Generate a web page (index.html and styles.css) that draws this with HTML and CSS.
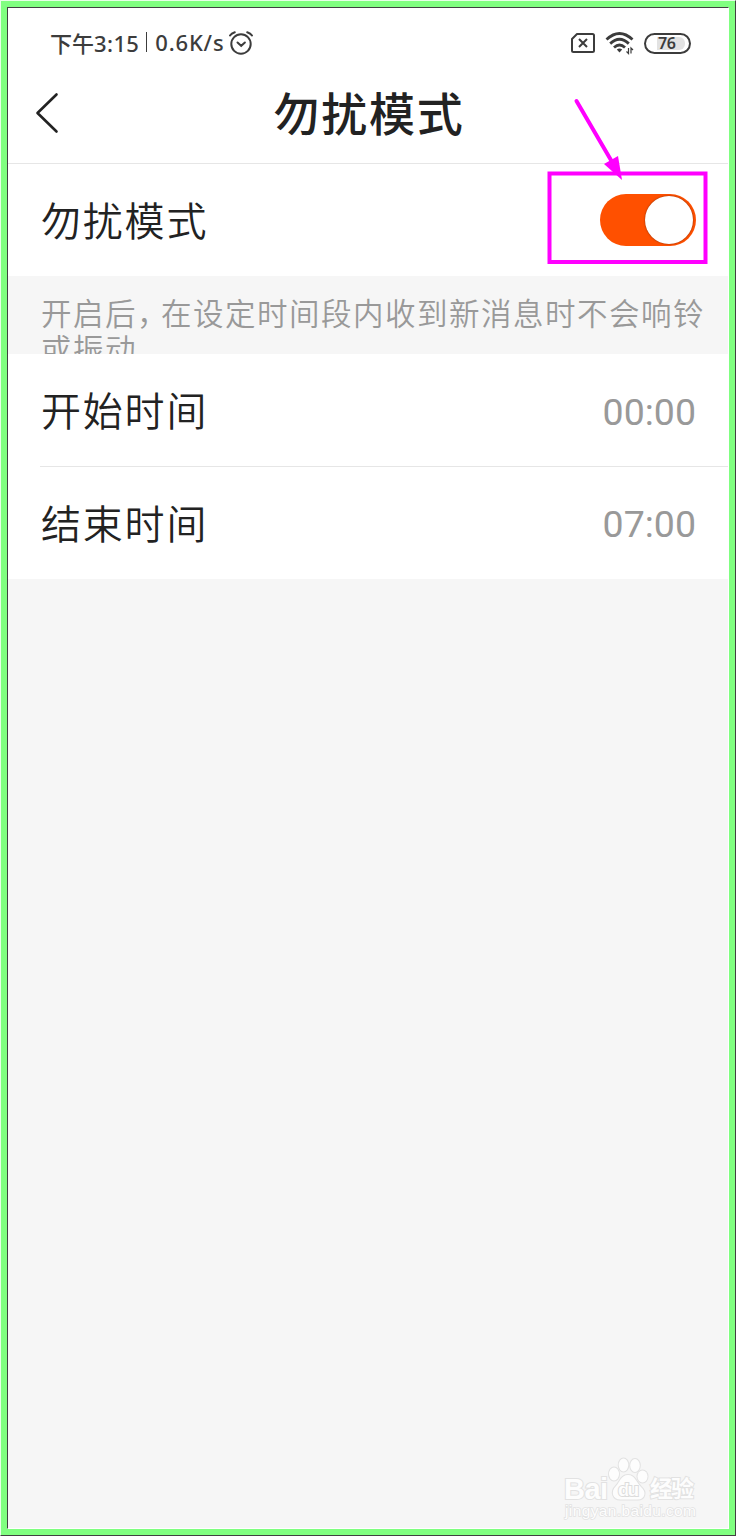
FILE: index.html
```html
<!DOCTYPE html>
<html lang="zh-CN">
<head>
    <meta charset="UTF-8">
    <meta name="viewport" content="width=device-width, initial-scale=1.0">
    <title>勿扰模式</title>
    <link rel="stylesheet" href="styles.css">
</head>
<body>

<div class="frame">
    <div class="screen">
        <div class="status">
            <span class="clock">下午<b>3:15</b></span>
            <span class="divider"></span>
            <span class="speed">0.6K/s</span>
            <svg class="alarm" width="26" height="26" viewBox="0 0 26 26" fill="none" stroke="#3c3c3c" stroke-width="2" stroke-linecap="round">
                <circle cx="13" cy="14" r="9.7"/>
                <path d="M9.5 12.5l3.7 3.3 3.7-3.3M2 5.5Q3.5 3.2 6.8 2.2M24 5.5Q22.5 3.2 19.2 2.2"/>
            </svg>
            <div class="status-right">
                <svg width="26" height="22" viewBox="0 0 26 22" fill="none" stroke="#3c3c3c" stroke-width="2">
                    <path d="M7 2H22.5q1.500 0 1.500 1.500v15q0 1.500-1.500 1.500H3.500q-1.500 0-1.500-1.500V7z" stroke-linejoin="round"/>
                    <path d="M9 7l8 8M17 7l-8 8"/>
                </svg>
                <svg width="30" height="24" viewBox="0 0 30 24" fill="none" stroke="#3c3c3c" stroke-width="2.800">
                    <path d="M1.500 8.500Q14.500-3.500 27.500 8.500M5.200 12.600Q14.500 4 23.800 12.600M9 16.500Q14.500 11.500 20 16.500"/>
                    <path d="M11.800 18.500Q14.500 16.500 17.200 18.500L14.500 21.500z" fill="#3c3c3c" stroke="none"/>
                    <path d="M23.500 17v5.500l-2-2M26 22.500V17l2 2" stroke-width="1.200"/>
                </svg>
                <span class="battery"><span class="level">76</span></span>
            </div>
        </div>

        <div class="header">
            <svg class="back" width="26" height="42" viewBox="0 0 26 42" fill="none" stroke="#222" stroke-width="2.600" stroke-linecap="round" stroke-linejoin="round">
                <path d="M22.500 2.500L3.500 21l19 18.500"/>
            </svg>
            <h1>勿扰模式</h1>
        </div>

        <div class="row">
            <span class="label">勿扰模式</span>
            <span class="switch"><span class="knob"></span></span>
        </div>
        <p class="hint">开启后<span class="comma">，</span>在设定时间段内收到新消息时不会响铃<br>或振动</p>
        <div class="row line">
            <span class="label">开始时间</span>
            <span class="time">00:00</span>
        </div>
        <div class="row">
            <span class="label">结束时间</span>
            <span class="time">07:00</span>
        </div>
    </div>

    <!-- highlight box and arrow over the switch -->
    <svg class="mark" width="170" height="176" viewBox="0 0 170 176">
        <rect x="10.500" y="84.500" width="156" height="88.500" fill="none" stroke="#ff00ff" stroke-width="4"/>
        <path d="M37.500 12l35 60" stroke="#ff00ff" stroke-width="4" stroke-linecap="round"/>
        <path d="M65 75L79 67 83 91z" fill="#ff00ff"/>
    </svg>

    <svg class="watermark" width="146" height="76" viewBox="0 0 146 76" fill="#fdfdfd" stroke="#e2e2e2" stroke-width="2" paint-order="stroke">
        <text class="wm-logo" x="2" y="49" textLength="44">Bai</text>
        <ellipse cx="52" cy="24" rx="5" ry="6.500"/>
        <ellipse cx="61.500" cy="15" rx="4.800" ry="6.500"/>
        <ellipse cx="73" cy="15.500" rx="4.800" ry="6.500"/>
        <ellipse cx="80.500" cy="26.500" rx="5" ry="6"/>
        <path d="M66 25C59 25 58 32 54 36C48 42 51 50 59 49.500H75C83 50 85 42 79 37C74 32 73 25 66 25z"/>
        <text class="wm-du" x="56" y="46" textLength="21">du</text>
        <text class="wm-cn" x="88" y="47" textLength="44">经验</text>
        <text class="wm-url" x="3" y="66" textLength="131">jingyan.baidu.com</text>
    </svg>
</div>

</body>
</html>
```
FILE: styles.css
```css
* {
    box-sizing: border-box;
}
body {
    margin: 0;
    font-family: "Noto Sans CJK SC", sans-serif;
    color: #222;
}
.frame {
    position: relative;
    width: 736px;
    height: 1536px;
    padding: 6px;
    background: #80ff80;
    border: 1px solid;
    border-color: #e8ffe8 #404040 #404040 #e8ffe8;
}
.screen {
    height: 1522px;
    background: #f6f6f6;
    border: 1px solid;
    border-color: #404040 #fff #fff #404040;
}
.status {
    display: flex;
    align-items: center;
    height: 70px;
    padding: 0 37px 0 42px;
    background: #fff;
    color: #3c3c3c;
    font-size: 22px;
}
.clock {
    padding-bottom: 3px;
    font-weight: 500;
}
.clock b {
    font-family: "Noto Sans", sans-serif;
    font-weight: 500;
    letter-spacing: 0.400px;
}
.divider {
    width: 1px;
    height: 20px;
    margin: 0 8px 2px 7px;
    background: #3c3c3c;
}
.speed {
    padding-bottom: 3px;
    font-family: "Noto Sans", sans-serif;
    font-weight: 500;
    letter-spacing: 0.800px;
}
.alarm {
    margin-left: 4px;
}
.status-right {
    display: flex;
    align-items: center;
    gap: 9px;
    margin-left: auto;
}
.battery {
    width: 47px;
    height: 21px;
    padding: 2px 4px 2px 11px;
    border: 2px solid #3c3c3c;
    border-radius: 11px;
}
.level {
    display: block;
    width: 28px;
    height: 13px;
    padding-left: 1px;
    background: #e2e2e2;
    border-radius: 0 6px 6px 0;
    font: 600 16px/12px "Noto Sans", sans-serif;
    letter-spacing: -0.500px;
}
.header {
    display: flex;
    align-items: center;
    height: 86px;
    padding: 0 26px 16px;
    background: #fff;
    border-bottom: 1px solid #e6e6e6;
}
.header h1 {
    flex: 1;
    margin: 0 24px 4px 0;
    font-size: 46px;
    font-weight: 500;
    letter-spacing: 1.700px;
    line-height: 64px;
    text-align: center;
}
.row {
    display: flex;
    align-items: center;
    justify-content: space-between;
    height: 112px;
    padding: 0 32px;
    background: #fff;
}
.row.line {
    height: 113px;
    background: linear-gradient(#e6e6e6, #e6e6e6) 32px 100% / 100% 1px no-repeat #fff;
}
.label {
    padding: 0 0 3px 1px;
    font-size: 40px;
    font-weight: 350;
    letter-spacing: 1.800px;
}
.switch {
    display: flex;
    justify-content: flex-end;
    width: 96px;
    height: 52px;
    padding: 2px 3px 2px 2px;
    background: #ff5000;
    border-radius: 26px;
}
.knob {
    width: 48px;
    height: 48px;
    background: #fff;
    border-radius: 50%;
    box-shadow: 0 0 2px rgba(0, 0, 0, 0.5);
}
.hint {
    height: 78px;
    margin: 0;
    padding: 18px 0 0 33px;
    overflow: hidden;
    color: #999;
    font-size: 30.500px;
    font-weight: 350;
    letter-spacing: 1.500px;
    line-height: 36px;
    white-space: nowrap;
}
.comma {
    letter-spacing: -6.500px;
}
.time {
    padding-top: 2px;
    color: #999;
    font-family: Roboto, sans-serif;
    font-size: 37.500px;
    font-weight: 400;
}
.mark {
    position: absolute;
    left: 538px;
    top: 88px;
}
.watermark {
    position: absolute;
    left: 561px;
    top: 1449px;
}
.wm-logo {
    font: bold 29px "Liberation Sans", sans-serif;
}
.wm-du {
    font: bold 19px "Liberation Sans", sans-serif;
    stroke: #dcdcdc;
}
.wm-cn {
    font: bold 23px "Noto Sans CJK SC", sans-serif;
}
.wm-url {
    font: 15.500px "Liberation Sans", sans-serif;
    stroke-width: 1.500px;
}
```
